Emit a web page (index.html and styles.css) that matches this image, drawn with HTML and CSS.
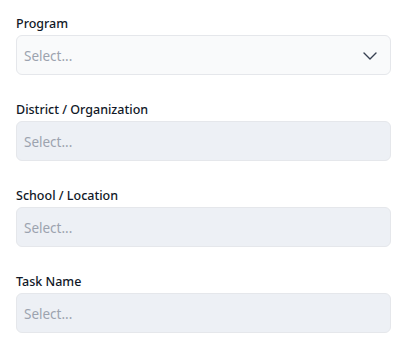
FILE: index.html
```html
<!DOCTYPE html>
<html lang="en">

<head>
    <meta charset="UTF-8">
    <meta name="viewport" content="width=device-width, initial-scale=1.0">
    <title>Filters</title>
    <link rel="stylesheet" href="styles.css">
</head>

<body>
    <form class="filters">
        <div class="field">
            <label>Program</label>
            <div class="select">
                <span>Select...</span>
                <svg class="chevron" width="14" height="8" viewBox="0 0 14 8">
                    <path d="M1 1l6 6 6-6" fill="none" stroke="#374151" stroke-width="1.4" stroke-linecap="round" stroke-linejoin="round" />
                </svg>
            </div>
        </div>
        <div class="field">
            <label>District / Organization</label>
            <div class="select disabled"><span>Select...</span></div>
        </div>
        <div class="field">
            <label>School / Location</label>
            <div class="select disabled"><span>Select...</span></div>
        </div>
        <div class="field">
            <label>Task Name</label>
            <div class="select disabled"><span>Select...</span></div>
        </div>
    </form>
</body>

</html>
```

FILE: styles.css
```css
body {
    margin: 0;
    padding: 15px 14px 0 16px;
    background: #fff;
    font-family: "Noto Sans", "Open Sans", sans-serif;
}

.filters {
    display: flex;
    flex-direction: column;
    gap: 26px;
}

.field label {
    display: block;
    font-size: 12.5px;
    font-weight: 500;
    line-height: 17px;
    color: #111827;
    margin-bottom: 3px;
}

.select {
    height: 40px;
    box-sizing: border-box;
    border: 1px solid #e5e7eb;
    border-radius: 6px;
    background: #f9fafb;
    display: flex;
    align-items: center;
    justify-content: space-between;
    padding: 1px 13px 0 7px;
    font-size: 13.5px;
    color: #9ca3af;
}

.select.disabled {
    background: #edf0f5;
}

.chevron {
    display: block;
}
```
